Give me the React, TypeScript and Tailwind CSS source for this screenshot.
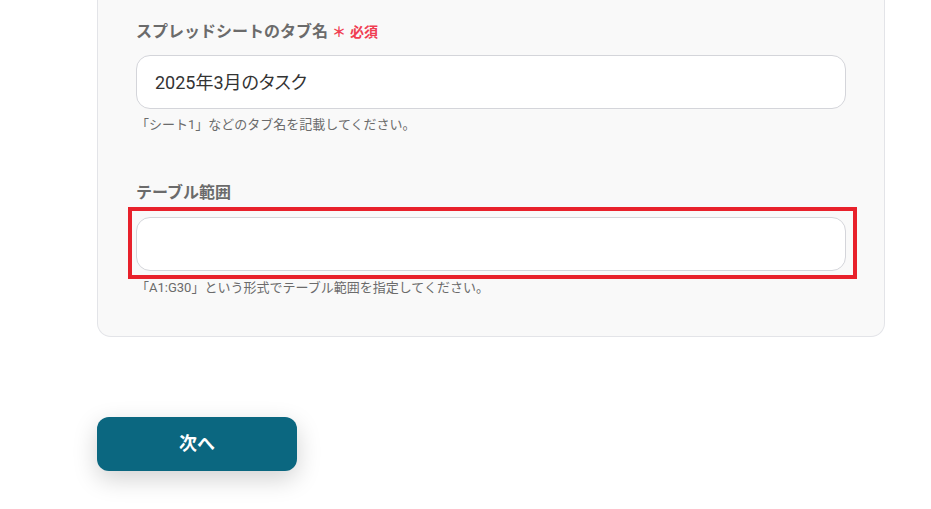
import React from "react";

const font = { fontFamily: 'Roboto, "Noto Sans CJK JP", "Noto Sans", sans-serif' };

export default function App() {
  return (
    <div className="w-[931px] h-[509px] bg-white overflow-hidden" style={font}>
      <div className="pl-[97px]">
        <div className="w-[788px] border border-t-0 border-[#e3e4e8] rounded-b-[14px] bg-[#f9f9f9] px-[38px] pt-[20px] pb-[39px]">
          <div className="flex items-center h-[24px] gap-[4px]">
            <span className="text-[16px] font-bold text-[#6b6b6b] leading-[24px]">スプレッドシートのタブ名</span>
            <span className="text-[14px] font-bold text-[#f03e52] leading-[24px]">＊</span>
            <span className="text-[14px] font-bold text-[#f03e52] leading-[24px]">必須</span>
          </div>
          <div className="mt-[11px] h-[54px] rounded-[14px] border border-[#d4d5da] bg-white flex items-center px-[18px]">
            <span className="text-[18px] text-[#333333] [font-feature-settings:'palt']">2025年3月のタスク</span>
          </div>
          <div className="mt-[6px] text-[13px] leading-[19px] text-[#6b6b6b]">
            <span>「</span>
            <span>シート1</span>
            <span>」</span>
            <span>などのタブ名を記載してください。</span>
          </div>

          <div className="mt-[47px] flex items-center h-[24px]">
            <span className="text-[16px] font-bold text-[#6b6b6b] leading-[24px]">テーブル範囲</span>
          </div>
          <div className="relative mt-[12px]">
            <div className="h-[54px] rounded-[14px] border border-[#d4d5da] bg-white" />
            <div className="absolute -left-[8px] -right-[11px] -top-[10px] -bottom-[8px] border-[4px] border-[#e8212b] pointer-events-none" />
          </div>
          <div className="mt-[7px] text-[13px] leading-[19px] text-[#6b6b6b]">
            <span>「</span>
            <span>A1:G30</span>
            <span>」</span>
            <span>という形式でテーブル範囲を指定してください。</span>
          </div>
        </div>
        <button className="mt-[80px] w-[200px] h-[54px] rounded-[12px] bg-[#0b6780] text-white text-[18px] font-bold leading-[54px] shadow-[0_8px_24px_rgba(0,0,0,0.18)]">
          次へ
        </button>
      </div>
    </div>
  );
}
